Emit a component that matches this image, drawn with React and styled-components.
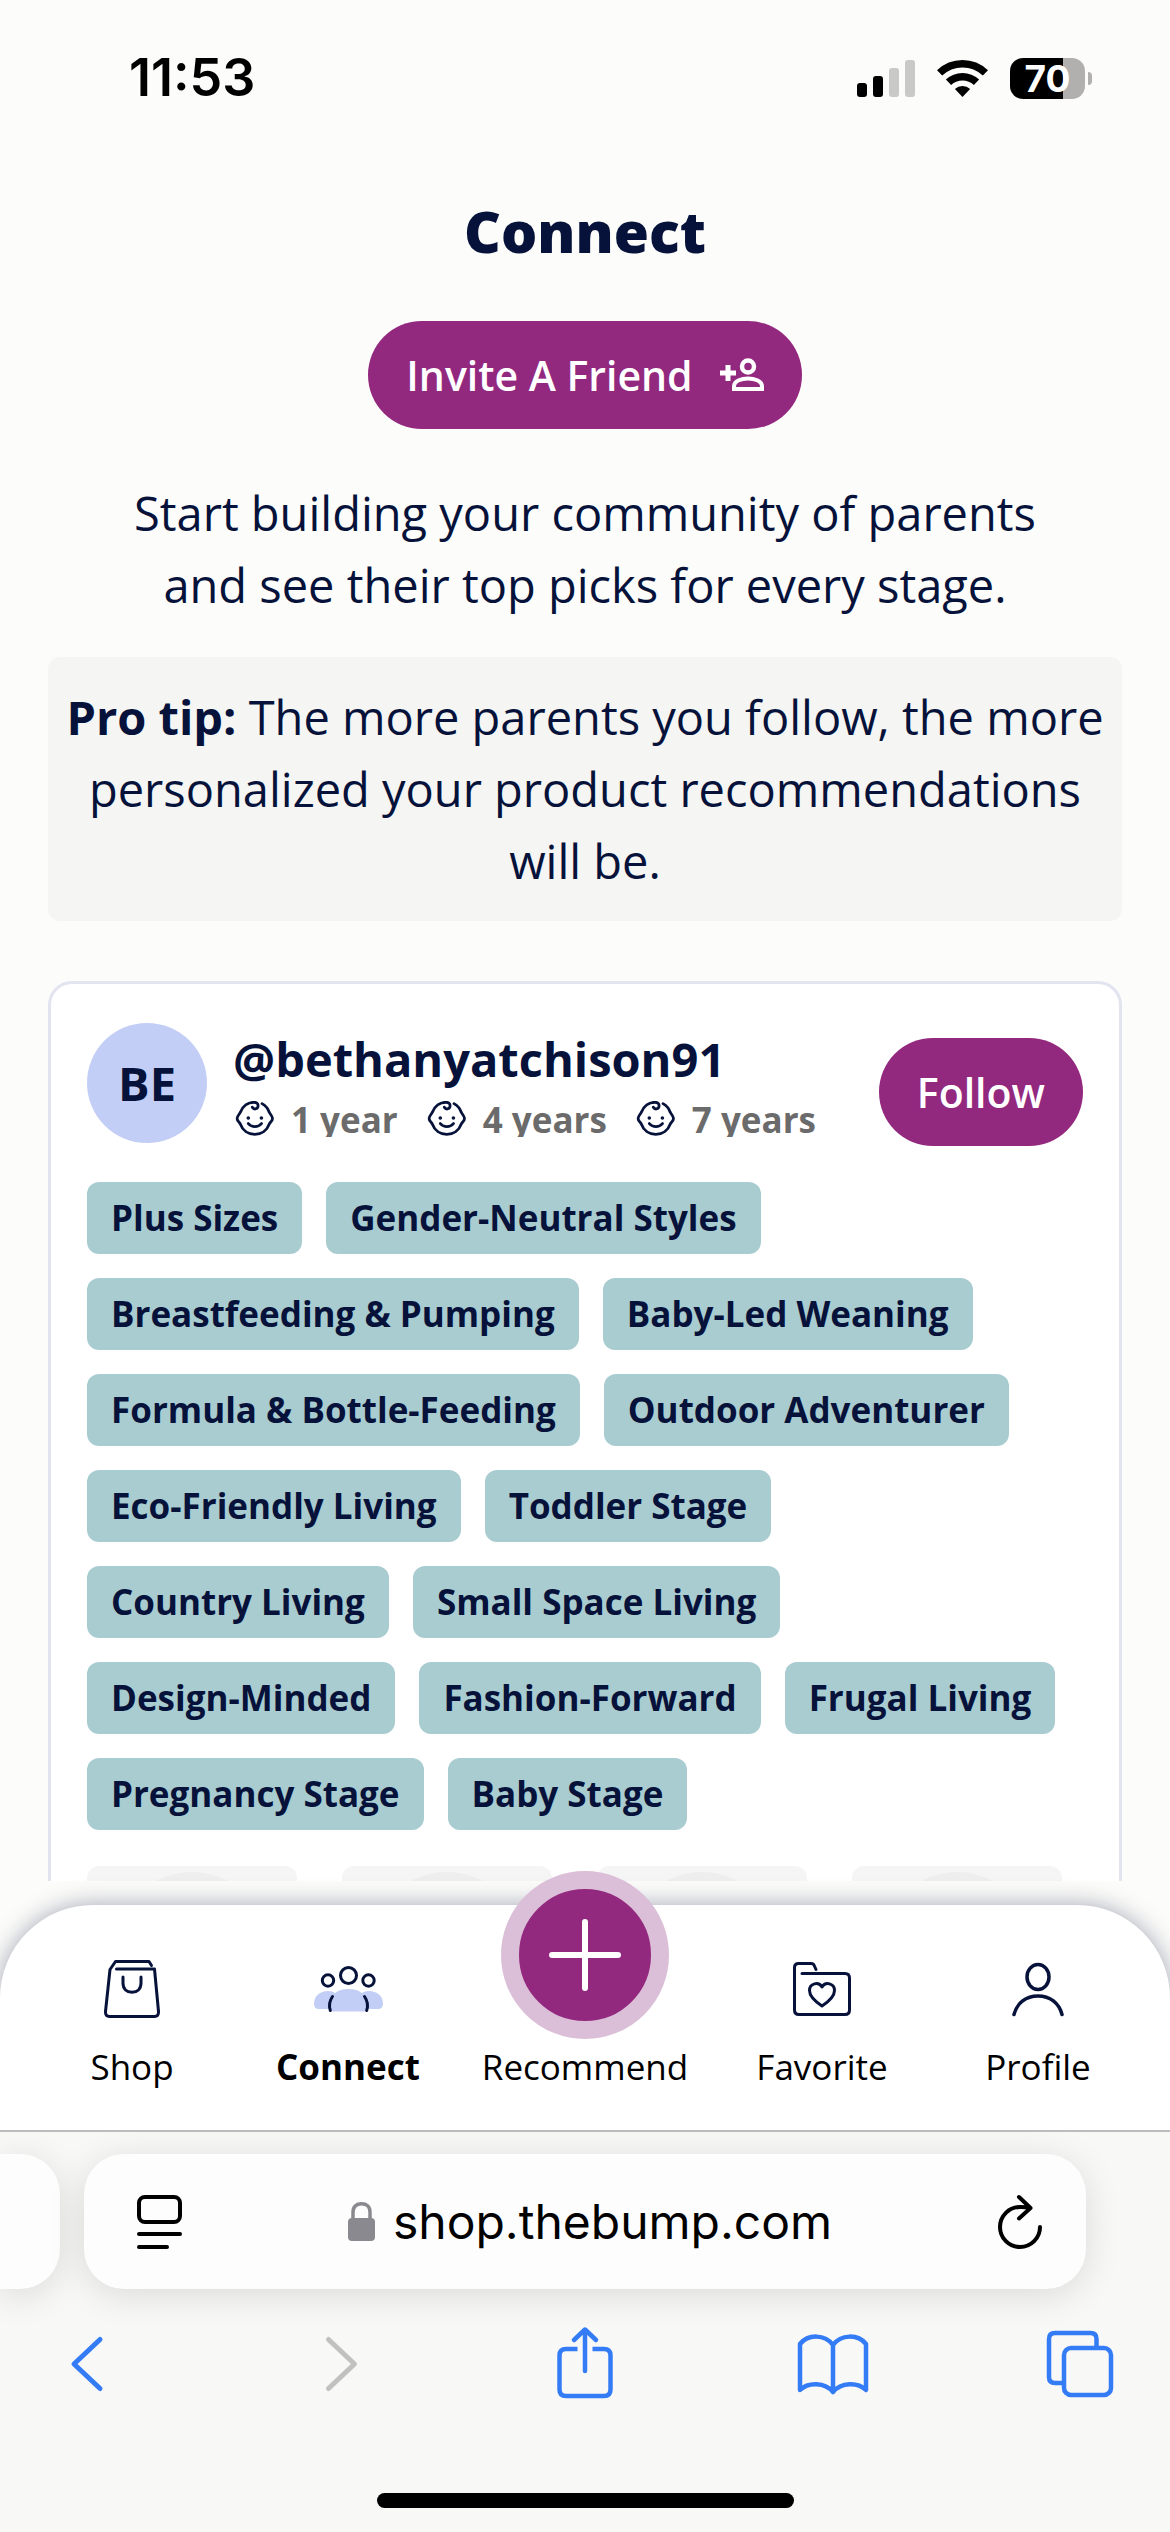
import styled, { createGlobalStyle } from "styled-components";

const GlobalStyle = createGlobalStyle`
  * {
    box-sizing: border-box;
  }

  body {
    margin: 0;
    background: #fcfcfa;
    color: #06123a;
    font-family: "Open Sans", "Noto Sans", sans-serif;
    font-size: 47px;
    line-height: 72px;
  }

  h1, h2, p, ul {
    margin: 0;
    padding: 0;
  }

  button {
    border: 0;
    padding: 0;
    background: none;
    font-family: inherit;
    cursor: pointer;
  }

  a {
    color: inherit;
    text-decoration: none;
  }

  svg {
    display: block;
    flex: none;
    overflow: visible;
  }
`;

const Screen = styled.div`
  display: flex;
  flex-direction: column;
  height: 100vh;
  overflow: hidden;
`;

const StatusBar = styled.header`
  display: flex;
  align-items: center;
  justify-content: space-between;
  padding: 42px 78px 33px 129px;
  font-family: Inter, "Liberation Sans", sans-serif;
`;

const Time = styled.time`
  font-size: 52px;
  font-weight: 600;
  line-height: 72px;
  color: #000;
`;

const StatusIcons = styled.div`
  display: flex;
  align-items: center;
  gap: 22px;
`;

const Battery = styled.div`
  display: flex;
  align-items: center;
  gap: 3px;

  .level {
    width: 75px;
    border-radius: 13px;
    background: linear-gradient(90deg, #000 53px, #b1b0ae 53px);
    color: #fff;
    font-size: 37px;
    font-weight: 700;
    line-height: 41px;
    text-align: center;
  }

  .tip {
    width: 4px;
    height: 13px;
    border-radius: 0 6px 6px 0;
    background: #b1b0ae;
  }
`;

const Main = styled.main`
  flex: 1 1 0;
  min-height: 0;
  overflow: hidden;
  display: flex;
  flex-direction: column;
  align-items: center;
  padding: 48px 48px 0;
`;

const Title = styled.h1`
  font-size: 57px;
  font-weight: 800;
  line-height: 72px;
`;

const PillButton = styled.button`
  flex: none;
  display: flex;
  align-items: center;
  gap: 27px;
  height: 108px;
  padding: 0 38px;
  border-radius: 54px;
  background: #93287f;
  color: #fff;
  font-size: 41px;
  font-weight: 600;
`;

const InviteButton = styled(PillButton)`
  margin-top: 54px;
`;

const Intro = styled.p`
  max-width: 960px;
  margin-top: 48px;
  text-align: center;
`;

const Tip = styled.p`
  width: 100%;
  margin-top: 36px;
  padding: 24px 12px;
  border-radius: 12px;
  background: #f5f5f4;
  text-align: center;
`;

const Card = styled.article`
  width: 100%;
  margin-top: 60px;
  padding: 39px 36px;
  border: 3px solid #e2e5f0;
  border-radius: 24px;
  background: #fff;
`;

const CardHeader = styled.div`
  display: flex;
  align-items: flex-start;

  ${PillButton} {
    margin: 15px 0 0 auto;
  }
`;

const Avatar = styled.div`
  flex: none;
  width: 120px;
  height: 120px;
  border-radius: 50%;
  background: #c3cef6;
  font-weight: 700;
  line-height: 120px;
  text-align: center;
`;

const Person = styled.div`
  margin-left: 26px;
`;

const UserName = styled.h2`
  font-size: 47px;
  font-weight: 700;
  line-height: 72px;
`;

const Ages = styled.ul`
  display: flex;
  gap: 30px;
  height: 36px;
  margin-top: 6px;
  padding-left: 3px;
  overflow: hidden;
  list-style: none;
  color: #6b6b6b;
  font-size: 35px;
  font-weight: 700;
  line-height: 38px;

  li {
    display: flex;
    align-items: flex-start;
    gap: 17px;
  }
`;

const TagRows = styled.div`
  display: flex;
  flex-direction: column;
  gap: 24px;
  margin-top: 36px;
`;

const TagRow = styled.ul`
  display: flex;
  gap: 24px;
  list-style: none;
`;

const Tag = styled.li`
  padding: 0 24px;
  border-radius: 12px;
  background: #a9ccd1;
  font-size: 35px;
  font-weight: 700;
  line-height: 72px;
  white-space: nowrap;
`;

const Products = styled.div`
  display: flex;
  gap: 45px;
  margin-top: 36px;
`;

const ProductPlaceholder = styled.div`
  display: flex;
  justify-content: center;
  width: 210px;
  height: 210px;
  padding-top: 6px;
  border-radius: 12px;
  background: #f5f5f5;

  &::before {
    content: "";
    width: 150px;
    height: 150px;
    border-radius: 50%;
    background: #eeeeee;
  }
`;

const TabBar = styled.nav`
  flex: none;
  display: grid;
  grid-template-columns: 216fr 216fr 258fr 216fr 216fr;
  grid-template-rows: 100%;
  align-items: end;
  margin-top: 24px;
  padding: 0 24px 39px;
  height: 225px;
  border-radius: 93px 93px 0 0;
  background: #fff;
  box-shadow: 0 0 24px rgba(6, 18, 58, 0.36);
`;

const TabLink = styled.a`
  display: flex;
  flex-direction: column;
  align-items: center;
  color: #000;
  font-size: 35px;
  font-weight: ${({ $active }) => ($active ? 700 : 400)};
  line-height: 48px;

  .icon {
    display: flex;
    align-items: center;
    height: 60px;
    margin-bottom: 24px;
  }
`;

const AddCircle = styled.span`
  display: flex;
  align-items: center;
  justify-content: center;
  width: 168px;
  height: 168px;
  margin-bottom: 4px;
  border: 18px solid #dbbed7;
  border-radius: 50%;
  background: #93287f;
`;

const Browser = styled.footer`
  flex: none;
  position: relative;
  display: flex;
  flex-direction: column;
  border-top: 2px solid #bcbcbc;
  background: #f8f8f7;
`;

const AddressRow = styled.div`
  display: flex;
  gap: 24px;
  padding: 22px 84px 0 0;
  overflow: hidden;
  height: 192px;
`;

const PreviousTab = styled.div`
  width: 60px;
  height: 135px;
  border-radius: 0 40px 40px 0;
  background: #fdfdfd;
  box-shadow: 0 6px 36px rgba(0, 0, 0, 0.12);
`;

const AddressBar = styled.div`
  flex: 1;
  display: flex;
  align-items: center;
  justify-content: space-between;
  height: 135px;
  padding: 0 44px 0 53px;
  border-radius: 40px;
  background: #fdfdfd;
  box-shadow: 0 6px 36px rgba(0, 0, 0, 0.12);
`;

const Address = styled.button`
  display: flex;
  align-items: center;
  gap: 18px;
  color: #000;
  font-family: Inter, "Liberation Sans", sans-serif;
  font-size: 48px;
  line-height: 72px;
`;

const Toolbar = styled.div`
  display: flex;
  justify-content: space-between;
  padding: 0 53px;
`;

const HomeIndicator = styled.div`
  width: 417px;
  height: 15px;
  margin: 97px auto 24px;
  border-radius: 8px;
  background: #000;
`;

const SignalIcon = () => (
  <svg width="58" height="37" viewBox="0 0 58 37">
    <rect y="23" width="10" height="14" rx="3" />
    <rect x="16" y="16" width="10" height="21" rx="3" />
    <rect x="32" y="8" width="10" height="29" rx="3" fill="#c9c9c7" />
    <rect x="48" width="10" height="37" rx="3" fill="#c9c9c7" />
  </svg>
);

const WifiIcon = () => (
  <svg width="51" height="37" viewBox="0 0 51 37">
    <g fill="none" stroke="#000" strokeWidth="7.5">
      <path d="M2.6 12.9a33.2 33.2 0 0 1 45.8 0" />
      <path d="M11.5 22.3a20.2 20.2 0 0 1 28 0" />
    </g>
    <path d="M25.5 37l-7.6-8a11 11 0 0 1 15.2 0z" />
  </svg>
);

const InviteIcon = () => (
  <svg width="44" height="34" viewBox="0 0 44 34" fill="none" stroke="#fff">
    <path d="M0 15h16M8 7v16" strokeWidth="5" />
    <circle cx="28" cy="8.5" r="6" strokeWidth="4.5" />
    <path d="M14 31v-2.5c0-6 8-8 14-8s14 2 14 8v2.5z" strokeWidth="4" />
  </svg>
);

const BabyIcon = () => (
  <svg
    width="38"
    height="35"
    viewBox="0 0 38 35"
    fill="none"
    stroke="#06123a"
    strokeWidth="2.8"
    strokeLinecap="round"
    strokeLinejoin="round"
  >
    <path d="M26 2.600c3.500 2 6 4.900 7.200 8.600 1.200 2.300 3.300 4 3.300 6.200 0 2.300-2 3.600-3.200 5.600-2.300 6.400-8 10.300-14.500 10.300S6.600 29.400 4.300 23c-1.200-2-3.200-3.300-3.200-5.600 0-2.200 2.100-3.900 3.300-6.200C6.700 5 12 1.300 18 1.300c3.300 0 4.400 2.200 4 4.300-.5 2.700-4.200 3.300-5.700.7" />
    <path d="M12.300 22.600c3.600 4 9.600 4 13.200 0" />
    <circle cx="12.300" cy="17" r=".8" fill="#06123a" strokeWidth="2" />
    <circle cx="25.400" cy="17" r=".8" fill="#06123a" strokeWidth="2" />
  </svg>
);

const lineIcon = {
  fill: "none",
  stroke: "#06123a",
  strokeWidth: 3,
  strokeLinecap: "round",
  strokeLinejoin: "round",
};

const ShopIcon = () => (
  <svg width="56" height="58" viewBox="0 0 56 58" {...lineIcon}>
    <path d="M47.500 5.500L45 1.500H11.500L6 9.500l-4.500 42q-.3 5 4 5h45q4.300 0 4-5L50.500 9h-38" />
    <path d="M19 17v6c0 6 3.800 9.300 9 9.300s9-3.300 9-9.300v-6" />
  </svg>
);

const ConnectIcon = () => (
  <svg width="69" height="46" viewBox="0 0 69 46" {...lineIcon}>
    <g fill="#c3cef6" stroke="none">
      <path d="M0 38c0-8 6-13 14-13 4 0 7 1.500 9 4v14H5q-5 0-5-5z" />
      <path d="M69 38c0-8-6-13-14-13-4 0-7 1.500-9 4v14h18q5 0 5-5z" />
      <path d="M15 40c0-11 8-17 19.500-17S54 29 54 40q0 5.500-4 5.500H19q-4 0-4-5.500z" />
    </g>
    <circle cx="34.500" cy="9.500" r="8" />
    <circle cx="14" cy="14.500" r="5.700" />
    <circle cx="54.500" cy="14.500" r="5.700" />
    <path d="M18.500 30.500c-3.500 5-3.700 9.500-2.200 14M50.500 30.500c3.500 5 3.700 9.500 2.200 14" />
  </svg>
);

const FavoriteIcon = () => (
  <svg width="58" height="54" viewBox="0 0 58 54" {...lineIcon}>
    <path d="M23 7.500l-1.800-4q-.9-2-3-2H5.500q-4 0-4 4V48q0 4.500 4.500 4.500h46q4.500 0 4.500-4.500V16q0-4.500-4.500-4.500H9" />
    <path d="M29 44c-6-4-12.500-9.700-12.500-15.500 0-7 9-9.500 12.500-3.500 3.500-6 12.500-3.500 12.500 3.500C41.500 34.300 35 40 29 44z" />
  </svg>
);

const ProfileIcon = () => (
  <svg width="52" height="54" viewBox="0 0 52 54" {...lineIcon} strokeWidth="3.5">
    <ellipse cx="26" cy="15" rx="11" ry="12.500" />
    <path d="M2 52.500C5 41 14 34 26 34s21 7 24 18.500" />
  </svg>
);

const PlusIcon = () => (
  <svg width="72" height="72" viewBox="0 0 72 72" {...lineIcon} stroke="#fff" strokeWidth="6">
    <path d="M36 3v66M3 36h66" />
  </svg>
);

const PageIcon = () => (
  <svg width="45" height="54" viewBox="0 0 45 54" {...lineIcon} stroke="#000" strokeWidth="4">
    <rect x="2" y="2" width="41" height="25" rx="6" />
    <path d="M2 39h41M2 52h28" />
  </svg>
);

const LockIcon = () => (
  <svg width="27" height="39" viewBox="0 0 27 39">
    <rect y="16" width="27" height="23" rx="4" fill="#8a898f" />
    <path
      d="M5 18v-8C5 4.500 8.500 1.800 13.500 1.800S22 4.500 22 10v8"
      fill="none"
      stroke="#8a898f"
      strokeWidth="3.5"
    />
  </svg>
);

const ReloadIcon = () => (
  <svg width="44" height="54" viewBox="0 0 44 54" {...lineIcon} stroke="#000" strokeWidth="4">
    <path d="M42 32a20 20 0 1 1-20-20c4 0 7 .2 9.500 1M21 2l11.500 11L21 23.500" />
  </svg>
);

const toolbarIcon = { ...lineIcon, stroke: "#347bf6", strokeWidth: 4.5 };

// every toolbar drawing sits on the same 72px square
const BackIcon = () => (
  <svg width="72" height="72" viewBox="0 0 72 72" {...toolbarIcon} strokeWidth="5">
    <path d="M47 15.500L21 40l26 24.500" />
  </svg>
);

const ForwardIcon = () => (
  <svg width="72" height="72" viewBox="0 0 72 72" {...toolbarIcon} stroke="#c1c1c0" strokeWidth="5">
    <path d="M27.500 15.500L53.500 40l-26 24.500" />
  </svg>
);

const ShareIcon = () => (
  <svg width="72" height="72" viewBox="0 0 72 72" {...toolbarIcon}>
    <path
      d="M28.500 25H17q-6.500 0-6.500 6.500v34q0 6.500 6.500 6.500h38q6.500 0 6.500-6.500v-34q0-6.500-6.500-6.500H43.500"
      strokeLinecap="butt"
    />
    <path d="M36 47V6M25 16L36 5.500 47 16" />
  </svg>
);

const BookIcon = () => (
  <svg width="72" height="72" viewBox="0 0 72 72" {...toolbarIcon}>
    <path d="M36 21C28 10 11 10 3 20v46c8-8 25-8 33 2 8-10 25-10 33-2V20C61 10 44 10 36 21zM36 21v47" />
  </svg>
);

const TabsIcon = () => (
  <svg width="72" height="72" viewBox="0 0 72 72" {...toolbarIcon}>
    <rect x="19" y="24" width="47" height="47" rx="7" />
    <path d="M51.500 22.500V15q0-6-6-6H10q-6 0-6 6v38q0 6 6 6h7" strokeLinecap="butt" />
  </svg>
);

const ages = ["1 year", "4 years", "7 years"];

const tagRows = [
  ["Plus Sizes", "Gender-Neutral Styles"],
  ["Breastfeeding & Pumping", "Baby-Led Weaning"],
  ["Formula & Bottle-Feeding", "Outdoor Adventurer"],
  ["Eco-Friendly Living", "Toddler Stage"],
  ["Country Living", "Small Space Living"],
  ["Design-Minded", "Fashion-Forward", "Frugal Living"],
  ["Pregnancy Stage", "Baby Stage"],
];

const tools = [
  { label: "Back", Icon: BackIcon },
  { label: "Forward", Icon: ForwardIcon, disabled: true },
  { label: "Share", Icon: ShareIcon },
  { label: "Bookmarks", Icon: BookIcon },
  { label: "Tabs", Icon: TabsIcon },
];

const Tab = ({ label, Icon, active }) => (
  <TabLink href="#" $active={active} aria-current={active ? "page" : undefined}>
    <span className="icon">
      <Icon />
    </span>
    {label}
  </TabLink>
);

const UserCard = () => (
  <Card>
    <CardHeader>
      <Avatar>BE</Avatar>
      <Person>
        <UserName>@bethanyatchison91</UserName>
        <Ages>
          {ages.map((age) => (
            <li key={age}>
              <BabyIcon />
              {age}
            </li>
          ))}
        </Ages>
      </Person>
      <PillButton type="button">Follow</PillButton>
    </CardHeader>
    <TagRows>
      {tagRows.map((tags) => (
        <TagRow key={tags[0]}>
          {tags.map((tag) => (
            <Tag key={tag}>{tag}</Tag>
          ))}
        </TagRow>
      ))}
    </TagRows>
    <Products>
      <ProductPlaceholder />
      <ProductPlaceholder />
      <ProductPlaceholder />
      <ProductPlaceholder />
    </Products>
  </Card>
);

const App = () => {
  return (
    <>
      <GlobalStyle />
      <Screen>
        <StatusBar>
          <Time>11:53</Time>
          <StatusIcons>
            <SignalIcon />
            <WifiIcon />
            <Battery>
              <span className="level">70</span>
              <span className="tip" />
            </Battery>
          </StatusIcons>
        </StatusBar>

        <Main>
          <Title>Connect</Title>
          <InviteButton type="button">
            Invite A Friend
            <InviteIcon />
          </InviteButton>
          <Intro>
            Start building your community of parents and see their top picks for
            every stage.
          </Intro>
          <Tip>
            <strong>Pro tip:</strong> The more parents you follow, the more
            personalized your product recommendations will be.
          </Tip>
          <UserCard />
        </Main>

        <TabBar>
          <Tab label="Shop" Icon={ShopIcon} />
          <Tab label="Connect" Icon={ConnectIcon} active />
          <TabLink href="#">
            <AddCircle>
              <PlusIcon />
            </AddCircle>
            Recommend
          </TabLink>
          <Tab label="Favorite" Icon={FavoriteIcon} />
          <Tab label="Profile" Icon={ProfileIcon} />
        </TabBar>

        <Browser>
          <AddressRow>
            <PreviousTab />
            <AddressBar>
              <button type="button" aria-label="Page menu">
                <PageIcon />
              </button>
              <Address type="button">
                <LockIcon />
                shop.thebump.com
              </Address>
              <button type="button" aria-label="Reload">
                <ReloadIcon />
              </button>
            </AddressBar>
          </AddressRow>
          <Toolbar>
            {tools.map(({ label, Icon, disabled }) => (
              <button key={label} type="button" aria-label={label} disabled={disabled}>
                <Icon />
              </button>
            ))}
          </Toolbar>
          <HomeIndicator />
        </Browser>
      </Screen>
    </>
  );
};

export default App;
